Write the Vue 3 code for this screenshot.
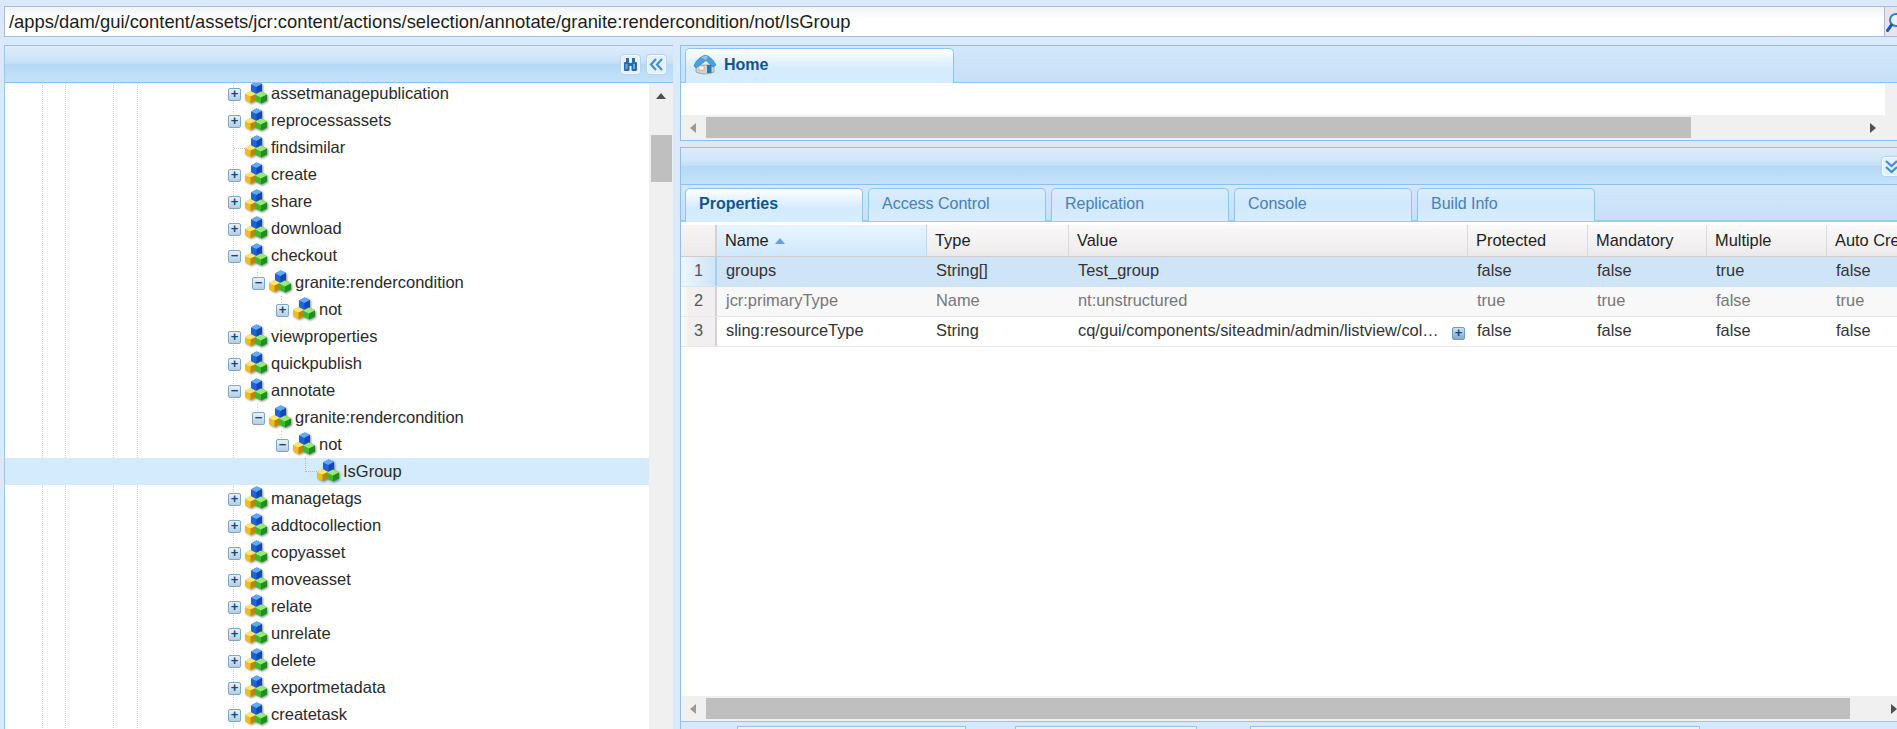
<script setup>
const tree = [
  { t: 'assetmanagepublication', l: 1, e: '+' },
  { t: 'reprocessassets', l: 1, e: '+' },
  { t: 'findsimilar', l: 1, e: '' },
  { t: 'create', l: 1, e: '+' },
  { t: 'share', l: 1, e: '+' },
  { t: 'download', l: 1, e: '+' },
  { t: 'checkout', l: 1, e: '-' },
  { t: 'granite:rendercondition', l: 2, e: '-' },
  { t: 'not', l: 3, e: '+' },
  { t: 'viewproperties', l: 1, e: '+' },
  { t: 'quickpublish', l: 1, e: '+' },
  { t: 'annotate', l: 1, e: '-' },
  { t: 'granite:rendercondition', l: 2, e: '-' },
  { t: 'not', l: 3, e: '-' },
  { t: 'IsGroup', l: 4, e: '', sel: true },
  { t: 'managetags', l: 1, e: '+' },
  { t: 'addtocollection', l: 1, e: '+' },
  { t: 'copyasset', l: 1, e: '+' },
  { t: 'moveasset', l: 1, e: '+' },
  { t: 'relate', l: 1, e: '+' },
  { t: 'unrelate', l: 1, e: '+' },
  { t: 'delete', l: 1, e: '+' },
  { t: 'exportmetadata', l: 1, e: '+' },
  { t: 'createtask', l: 1, e: '+' },
]
const tabs = ['Properties', 'Access Control', 'Replication', 'Console', 'Build Info']
const cols = ['Name', 'Type', 'Value', 'Protected', 'Mandatory', 'Multiple', 'Auto Created']
const rows = [
  { n: 1, c: ['groups', 'String[]', 'Test_group', 'false', 'false', 'true', 'false'], cls: 'sel' },
  { n: 2, c: ['jcr:primaryType', 'Name', 'nt:unstructured', 'true', 'true', 'false', 'true'], cls: 'prot' },
  { n: 3, c: ['sling:resourceType', 'String', 'cq/gui/components/siteadmin/admin/listview/col…', 'false', 'false', 'false', 'false'], cls: '', more: true },
]
</script>

<template>
  <div class="app">
    <div class="addr">
      <div class="addr-input">/apps/dam/gui/content/assets/jcr:content/actions/selection/annotate/granite:rendercondition/not/IsGroup</div>
      <div class="addr-btn">
        <svg class="search" width="22" height="22" viewBox="0 0 22 22">
          <circle cx="11" cy="8" r="6" fill="#e8f3fc" stroke="#2f7fc4" stroke-width="2" />
          <path d="M6.5 13 L2.5 18.5" stroke="#1f5f9e" stroke-width="3" stroke-linecap="round" />
        </svg>
      </div>
    </div>

    <div class="main">
      <section class="left">
        <header class="phead left-head">
          <button class="tool">
            <svg width="15" height="15" viewBox="0 0 15 15" fill="#2a6aa8">
              <rect x="3" y="1" width="3" height="4" />
              <rect x="9" y="1" width="3" height="4" />
              <rect x="1" y="5" width="5.5" height="9" rx="1" />
              <rect x="8.5" y="5" width="5.5" height="9" rx="1" />
              <rect x="6" y="6" width="3" height="3" />
              <rect x="2.5" y="7" width="2" height="5" fill="#6fa3d4" />
              <rect x="10" y="7" width="2" height="5" fill="#6fa3d4" />
            </svg>
          </button>
          <button class="tool">
            <svg width="15" height="13" viewBox="0 0 15 13" fill="none" stroke="#3f8fd2" stroke-width="2.2">
              <path d="M7 1 L2 6.5 L7 12" />
              <path d="M13 1 L8 6.5 L13 12" />
            </svg>
          </button>
        </header>
        <div class="left-body">
          <div class="tree">
            <div class="tree-inner">
              <div v-for="(n, i) in tree" :key="i" class="node" :class="['l' + n.l, { sel: n.sel, leaf: !n.e }]">
                <span v-if="n.e" class="exp">{{ n.e === '+' ? '+' : '−' }}</span>
                <span v-else class="noexp"></span>
                <svg class="cube" width="22" height="23" viewBox="0 0 22 23">
                  <path d="M6 3.5 L11.5 0.5 L17 3 V11 L11.5 14 L6 11 Z" fill="#1f63d8" />
                  <path d="M6 3.5 L11.5 0.5 L17 3 L11.5 6 Z" fill="#63a9f5" />
                  <path d="M11.5 6 L17 3 V11 L11.5 14 Z" fill="#1646b4" />
                  <path d="M0 13 L5.5 10 L11 13 V19 L5.5 22 L0 19 Z" fill="#f0bd18" />
                  <path d="M0 13 L5.5 10 L11 13 L5.5 15.5 Z" fill="#fae673" />
                  <path d="M5.5 15.5 L11 13 V19 L5.5 22 Z" fill="#bd8508" />
                  <path d="M10 13.5 L16 10.5 L22 13.5 V19.5 L16 22.5 L10 19.5 Z" fill="#3cba2c" />
                  <path d="M10 13.5 L16 10.5 L22 13.5 L16 16.5 Z" fill="#9de873" />
                  <path d="M16 16.5 L22 13.5 V19.5 L16 22.5 Z" fill="#1b8f1f" />
                </svg>
                <span class="lbl">{{ n.t }}</span>
              </div>
            </div>
          </div>
          <div class="vscroll">
            <i class="arr-up"></i>
            <i class="vthumb"></i>
          </div>
        </div>
      </section>

      <div class="right">
        <section class="rtop">
          <div class="strip home-strip">
            <div class="tab active home">
              <svg class="house" width="24" height="22" viewBox="0 0 24 22">
                <path d="M3 11 V18 Q12 22 21 18 V11 Z" fill="#d3d2ce" stroke="#9a9a95" stroke-width=".8" />
                <path d="M1 12 Q2 7 8 3 Q12 0 15 2 Q20 5 23 11 L20 13 L13 6.5 L3 14 Z" fill="#4b9fe0" stroke="#2f75b5" stroke-width=".6" />
                <path d="M8 3.5 Q12 .8 15 2.5 L13 6 Z" fill="#8cc8f2" />
                <rect x="14" y="11" width="4.5" height="8" fill="#2b75bd" />
                <rect x="6" y="12" width="5" height="4" fill="#f5f5f2" stroke="#9a9a95" stroke-width=".5" />
              </svg>
              <span>Home</span>
            </div>
          </div>
          <div class="rtop-body">
            <div class="rtop-main">
              <div class="blank"></div>
              <div class="hscroll">
                <i class="arr-l"></i>
                <i class="hthumb top-thumb"></i>
                <i class="arr-r"></i>
              </div>
            </div>
            <div class="mini-v">
              <i class="mini-up"></i>
              <i class="mini-down"></i>
            </div>
          </div>
        </section>

        <section class="rbot">
          <header class="phead right-head">
            <button class="tool">
              <svg width="15" height="15" viewBox="0 0 15 15" fill="none" stroke="#3f8fd2" stroke-width="2.2">
                <path d="M2 2 L7.5 7 L13 2" />
                <path d="M2 8 L7.5 13 L13 8" />
              </svg>
            </button>
          </header>
          <div class="strip tab-strip">
            <div v-for="(t, i) in tabs" :key="t" class="tab ptab" :class="{ active: i === 0 }">{{ t }}</div>
          </div>
          <div class="grid-wrap">
            <div class="grow ghead">
              <div class="gnum"></div>
              <div v-for="(c, i) in cols" :key="c" class="gh" :class="{ sorted: i === 0 }">
                {{ c }}<i v-if="i === 0" class="sort"></i>
              </div>
            </div>
            <div v-for="r in rows" :key="r.n" class="grow gbody" :class="r.cls">
              <div class="gnum">{{ r.n }}</div>
              <div v-for="(v, i) in r.c" :key="i" class="gc" :class="{ val: r.more && i === 2 }">
                {{ v }}<span v-if="r.more && i === 2" class="exp cell-exp">+</span>
              </div>
            </div>
          </div>
          <div class="hscroll bot-scroll">
            <i class="arr-l"></i>
            <i class="hthumb bot-thumb"></i>
            <i class="arr-r"></i>
          </div>
          <footer class="statusbar">
            <i class="box b1"></i>
            <i class="box b2"></i>
            <i class="box b3"></i>
          </footer>
        </section>
      </div>
    </div>
  </div>
</template>

<style>
html, body { margin: 0; background: #dbe9fb; }
</style>

<style scoped>
.app {
  width: 1897px;
  height: 729px;
  overflow: hidden;
  background: #dbe9fb;
  font-family: "Liberation Sans", Arial, sans-serif;
  color: #222;
}
.addr {
  display: flex;
  height: 31px;
  margin: 6px 0 8px 4px;
}
.addr-input {
  width: 1881px;
  flex: none;
  box-sizing: border-box;
  border: 1px solid #aabcd6;
  background: linear-gradient(#eef4f4, #fff 40%);
  font-size: 18.4px;
  line-height: 29px;
  padding-left: 4px;
  color: #1c1c1c;
  white-space: nowrap;
}
.addr-btn {
  flex: 1;
  display: flex;
  align-items: center;
  background: #e6e4ee;
  border-top: 1px solid #aabcd6;
  border-bottom: 1px solid #aabcd6;
  overflow: hidden;
}
.search {
  flex: none;
  margin-top: 2px;
}
.main {
  display: flex;
  gap: 7px;
  padding-left: 4px;
  height: 684px;
}
.left {
  width: 669px;
  flex: none;
  display: flex;
  flex-direction: column;
  background: #fff;
  border-left: 1px solid #9cc6ea;
  box-sizing: border-box;
}
.phead {
  height: 38px;
  flex: none;
  box-sizing: border-box;
  border-top: 1px solid #8fc1e6;
  border-bottom: 1px solid #8fc1e6;
  display: flex;
  align-items: center;
  justify-content: flex-end;
  background: linear-gradient(#dcedfc, #c8e1f8 48%, #b5d8f5 50%, #c5e1f9);
}
.left-head {
  gap: 5px;
  padding-right: 6px;
}
.tool {
  width: 21px;
  height: 21px;
  flex: none;
  padding: 0;
  display: flex;
  align-items: center;
  justify-content: center;
  background: #e4f1fd;
  border: 1px solid #b3d5f0;
  border-radius: 4px;
  box-shadow: inset 0 0 0 1px #f3f9fe;
}
.left-body {
  flex: 1;
  display: flex;
  min-height: 0;
}
.tree {
  flex: 1;
  overflow: hidden;
  --dots: repeating-linear-gradient(to bottom, #dbc9d1 0 1px, transparent 1px 2px);
  background-image: var(--dots), var(--dots), var(--dots), var(--dots), var(--dots);
  background-size: 1px 100%;
  background-repeat: no-repeat;
  background-position: 37px 0, 60px 0, 108px 0, 132px 0, 228px 0;
}
.tree-inner {
  margin-top: -3px;
}
.node {
  height: 27px;
  display: flex;
  align-items: center;
  font-size: 16.5px;
  position: relative;
  white-space: nowrap;
}
.node.sel { background: #d4eafd; }
.l1 { padding-left: 223px; }
.l2 { padding-left: 247px; }
.l3 { padding-left: 271px; }
.l4 { padding-left: 295px; }
.l2::before, .l3::before {
  content: "";
  position: absolute;
  top: 0;
  height: 7px;
  width: 1px;
  background: repeating-linear-gradient(to bottom, #c6c6c6 0 1px, transparent 1px 3px);
}
.l2::before { left: 252px; }
.l3::before { left: 276px; }
.l4::before {
  content: "";
  position: absolute;
  left: 300px;
  top: 0;
  width: 12px;
  height: 14px;
  border-left: 1px dotted #b8b8b8;
  border-bottom: 1px dotted #b8b8b8;
  box-sizing: border-box;
}
.leaf.l1::after {
  content: "";
  position: absolute;
  left: 229px;
  top: 14px;
  width: 11px;
  border-top: 1px dotted #c6c6c6;
}
.exp {
  width: 13px;
  height: 13px;
  flex: none;
  box-sizing: border-box;
  margin-right: 4px;
  margin-top: 2px;
  border: 1px solid #7fa6c6;
  border-radius: 2px;
  background: linear-gradient(#e9f1f8, #b4cde2);
  color: #14497c;
  font: bold 13px/10px "Liberation Sans", Arial, sans-serif;
  text-align: center;
  position: relative;
  z-index: 1;
}
.noexp {
  width: 17px;
  flex: none;
}
.cube {
  flex: none;
  margin-top: -3px;
  filter: drop-shadow(1px 1px 1px rgba(0, 0, 0, .45));
  position: relative;
  z-index: 1;
}
.lbl {
  margin-left: 4px;
  color: #2a2a2a;
}
.vscroll {
  width: 24px;
  flex: none;
  background: #f0f0f0;
  position: relative;
  display: flex;
  flex-direction: column;
  align-items: flex-end;
}
.arr-up {
  align-self: center;
  margin-top: 10px;
  border: 5.5px solid transparent;
  border-top: 0;
  border-bottom: 6px solid #505050;
}
.vthumb {
  width: 21px;
  height: 47px;
  margin-top: 36px;
  margin-right: 1px;
  background: #bfbfbf;
}
.right {
  width: 1240px;
  flex: none;
  display: flex;
  flex-direction: column;
  gap: 6px;
}
.rtop {
  height: 96px;
  flex: none;
  box-sizing: border-box;
  border: 1px solid #8fc1e6;
  background: #fff;
  display: flex;
  flex-direction: column;
}
.strip {
  display: flex;
  box-sizing: border-box;
  background: linear-gradient(#d2e7fa, #c7e0f7);
  border-bottom: 1px solid #8fc5ea;
}
.home-strip {
  height: 37px;
  padding: 2px 0 0 4px;
  flex: none;
}
.tab {
  box-sizing: border-box;
  border: 1px solid #8fc5ea;
  border-bottom: 0;
  border-radius: 5px 5px 0 0;
  background: linear-gradient(#dbedfc, #cfe8fb 50%, #d8eefe);
  margin-bottom: -1px;
}
.tab.active {
  background: linear-gradient(#fff, #ebf6fe 25%, #d3ebfd 60%, #d6edfe);
}
.home {
  width: 269px;
  display: flex;
  align-items: center;
  padding-left: 7px;
  padding-bottom: 2px;
  gap: 7px;
  color: #0e5595;
  font-weight: bold;
  font-size: 16px;
}
.rtop-body {
  flex: 1;
  display: flex;
  min-height: 0;
}
.rtop-main {
  width: 1204px;
  flex: none;
  display: flex;
  flex-direction: column;
}
.blank { flex: 1; }
.hscroll {
  height: 25px;
  flex: none;
  background: #f0f0f0;
  display: flex;
  align-items: center;
  position: relative;
}
.arr-l {
  margin-left: 9px;
  border: 5.5px solid transparent;
  border-left: 0;
  border-right: 6px solid #9a9a9a;
}
.arr-r {
  border: 5.5px solid transparent;
  border-right: 0;
  border-left: 6px solid #505050;
}
.hthumb {
  height: 21px;
  background: #bfbfbf;
  margin-left: 10px;
}
.top-thumb {
  width: 985px;
  margin-right: 179px;
}
.mini-v {
  flex: 1;
  background: #f0f0f0;
  display: flex;
  flex-direction: column;
  align-items: center;
  padding-top: 6px;
  gap: 5px;
}
.mini-up {
  border: 5px solid transparent;
  border-top: 0;
  border-bottom: 5px solid #b0b0b0;
}
.mini-down {
  border: 5px solid transparent;
  border-bottom: 0;
  border-top: 5px solid #505050;
}
.rbot {
  flex: 1;
  min-height: 0;
  display: flex;
  flex-direction: column;
  box-sizing: border-box;
  border-left: 1px solid #8fc1e6;
  background: #fff;
}
.right-head {
  height: 37px;
  padding-right: 18px;
  border-bottom: 0;
}
.tab-strip {
  height: 38px;
  flex: none;
  padding: 3px 0 0 4px;
  gap: 5px;
  border-top: 1px solid #8fc1e6;
  border-bottom: 2px solid #9accec;
}
.ptab {
  width: 178px;
  height: 33px;
  padding-left: 13px;
  font-size: 16px;
  line-height: 29px;
  color: #4a7fb7;
}
.ptab.active {
  color: #0e5595;
  font-weight: bold;
  height: 34px;
}
.grid-wrap {
  flex: 1;
  min-height: 0;
  padding-top: 3px;
}
.grow {
  display: grid;
  grid-template-columns: 36px 210px 142px 399px 120px 119px 120px 110px;
  font-size: 16.4px;
  white-space: nowrap;
}
.ghead {
  height: 31px;
  background: linear-gradient(#faf9f9, #f4f2f2 50%, #ebe9e9);
  border-bottom: 1px solid #d2cbcb;
  box-sizing: content-box;
  color: #1e1e1e;
}
.ghead .gnum {
  background: linear-gradient(#f6f4f4, #ebe9e9);
  border-right: 2px solid #d5d1d1;
}
.gh {
  padding-left: 8px;
  line-height: 31px;
  border-right: 1px solid #dcd8d8;
  overflow: hidden;
  position: relative;
}
.gh.sorted {
  background: linear-gradient(#e9f5fe, #d0e8fc);
  border-right-color: #b9d9f2;
}
.sort {
  display: inline-block;
  margin-left: 6px;
  vertical-align: 2px;
  border: 5.5px solid transparent;
  border-top: 0;
  border-bottom: 6px solid #5aa8e2;
}
.gbody {
  height: 30px;
  box-sizing: border-box;
  line-height: 27px;
  border-bottom: 1px solid #e9e9e9;
  color: #333;
}
.gbody .gnum {
  text-align: right;
  padding-right: 12px;
  box-sizing: border-box;
  color: #555;
  background: linear-gradient(to right, #fff 0, #f1efef 8px);
  border-right: 2px solid #d5d1d1;
}
.gc {
  padding-left: 9px;
  overflow: hidden;
  position: relative;
}
.gbody.sel {
  background: #d0e4f8;
  border-bottom-color: #d0e4f8;
}
.gbody.sel .gnum {
  background: linear-gradient(to right, #eef7fe, #cfe4f8);
  border-right-color: #a5d0f2;
}
.gbody.prot {
  background: #f9f8f8;
  color: #777;
}
.cell-exp {
  position: absolute;
  left: 383px;
  top: 10px;
  margin: 0;
  background: linear-gradient(#cfe0ef, #7fa9cd);
  border-color: #6f9cc3;
}
.bot-thumb {
  width: 1144px;
  margin-right: 41px;
}
.statusbar {
  flex: none;
  height: 8px;
  border-top: 1px solid #9cc3e0;
  background: #d6eafc;
  display: flex;
  padding-top: 4px;
  box-sizing: border-box;
}
.box {
  display: block;
  height: 10px;
  flex: none;
  box-sizing: border-box;
  border: 1px solid #a9bcd8;
  background: #edf3f5;
}
.b1 { width: 229px; margin-left: 56px; }
.b2 { width: 182px; margin-left: 49px; }
.b3 { width: 450px; margin-left: 53px; }
</style>
